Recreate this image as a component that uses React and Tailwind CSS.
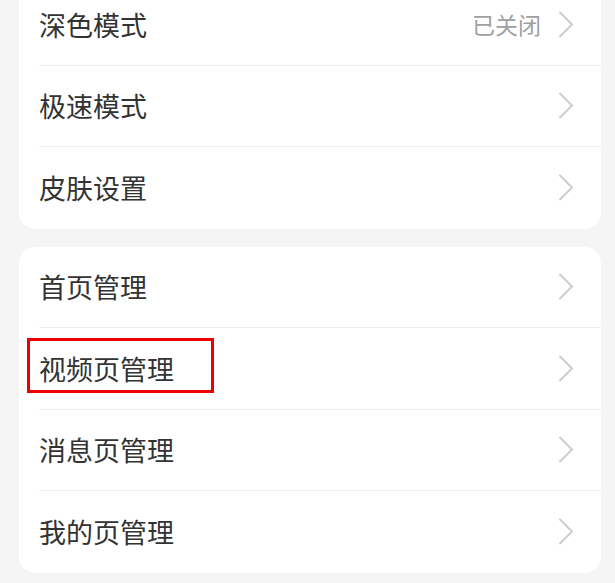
import React from "react";

// 设置页：分组卡片 + 列表行
const Chevron = () => (
  <svg width="16" height="27" viewBox="0 0 16 27" fill="none" className="shrink-0">
    <path d="M2 1.5 L14 13.5 L2 25.5" stroke="#cccccc" strokeWidth="2" strokeLinecap="round" strokeLinejoin="round" />
  </svg>
);

const Row = ({ label, value, last, boxed }) => (
  <div className="relative h-[81.5px] pl-[20px]">
    <div className={`h-full flex items-center pr-[27px] ${last ? "" : "border-b border-[#eeeeee]"}`}>
      <span className="flex-1 text-[27px] leading-none text-[#333333]">{label}</span>
      {value && <span className="mr-[17px] text-[23px] leading-none text-[#a0a0a0]">{value}</span>}
      <Chevron />
    </div>
    {/* 红框标注 */}
    {boxed && (
      <div className="absolute left-[8px] top-[10px] w-[187px] h-[55px] border-[3px] border-[#ee0000]" />
    )}
  </div>
);

const Card = ({ rows, className }) => (
  <div className={`ml-[19px] w-[582px] bg-white rounded-[16px] overflow-visible ${className || ""}`}>
    {rows.map((r, i) => (
      <Row key={r.label} {...r} last={i === rows.length - 1} />
    ))}
  </div>
);

export default function App() {
  return (
    <div
      className="w-[615px] h-[583px] overflow-hidden bg-[#f5f5f5]"
      style={{ fontFamily: '"Noto Sans CJK SC", "Noto Sans", sans-serif' }}
    >
      <div className="-mt-[16px]">
        <Card
          rows={[
            { label: "深色模式", value: "已关闭" },
            { label: "极速模式" },
            { label: "皮肤设置" },
          ]}
        />
        <Card
          className="mt-[18px]"
          rows={[
            { label: "首页管理" },
            { label: "视频页管理", boxed: true },
            { label: "消息页管理" },
            { label: "我的页管理" },
          ]}
        />
      </div>
    </div>
  );
}
